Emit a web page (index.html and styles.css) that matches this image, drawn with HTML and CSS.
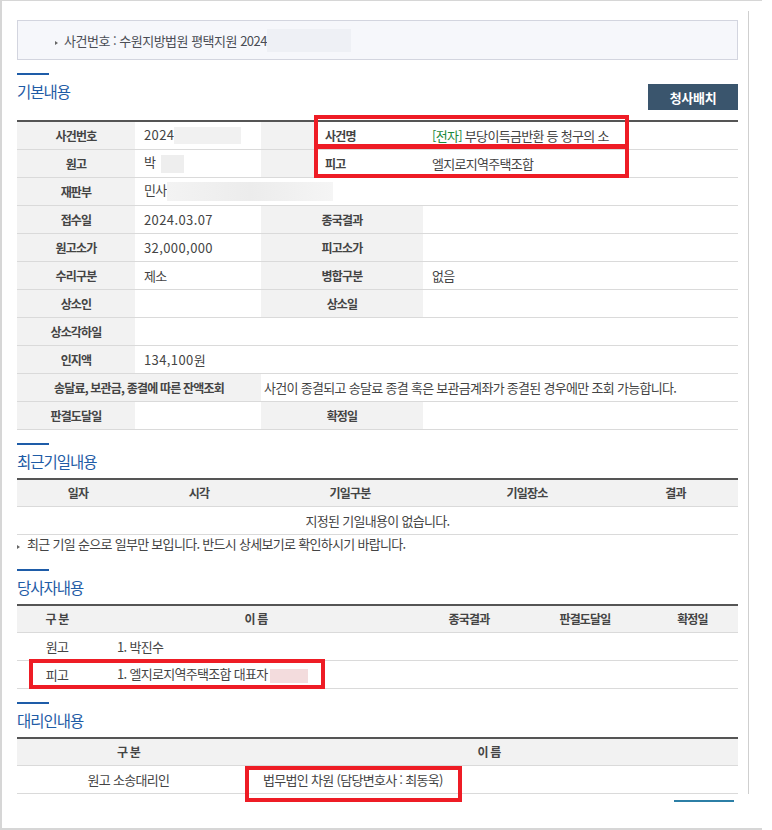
FILE: index.html
```html
<!DOCTYPE html>
<html lang="ko">
<head>
    <meta charset="UTF-8">
    <meta name="viewport" content="width=device-width, initial-scale=1.0">
    <title>사건일반내용</title>
    <link rel="stylesheet" href="styles.css">
</head>
<body>
<div class="frame">
    <div class="page">
        <div class="case-box">
            <span class="bullet"></span>사건번호 : 수원지방법원 평택지원 2024<span class="mask mask-case"></span>
        </div>

        <!-- 기본내용 -->
        <div class="sec-head">
            <h2 class="sec-title">기본내용</h2>
            <button class="btn-map">청사배치</button>
        </div>
        <table class="grid info">
            <colgroup>
                <col class="w118"><col class="w126"><col class="w162"><col>
            </colgroup>
            <tr>
                <th>사건번호</th>
                <td class="num">2024<span class="mask mask-no"></span></td>
                <th class="plain">사건명</th>
                <td><span class="tag">[전자]</span> 부당이득금반환 등 청구의 소</td>
            </tr>
            <tr>
                <th>원고</th>
                <td>박<span class="mask mask-name"></span></td>
                <th class="plain">피고</th>
                <td>엘지로지역주택조합</td>
            </tr>
            <tr>
                <th>재판부</th>
                <td colspan="3">민사<span class="mask mask-court"></span></td>
            </tr>
            <tr>
                <th>접수일</th>
                <td class="num">2024.03.07</td>
                <th>종국결과</th>
                <td></td>
            </tr>
            <tr>
                <th>원고소가</th>
                <td class="num">32,000,000</td>
                <th>피고소가</th>
                <td></td>
            </tr>
            <tr>
                <th>수리구분</th>
                <td>제소</td>
                <th>병합구분</th>
                <td>없음</td>
            </tr>
            <tr>
                <th>상소인</th>
                <td></td>
                <th>상소일</th>
                <td></td>
            </tr>
            <tr>
                <th>상소각하일</th>
                <td colspan="3"></td>
            </tr>
            <tr>
                <th>인지액</th>
                <td colspan="3" class="num">134,100원</td>
            </tr>
            <tr>
                <th colspan="2">송달료, 보관금, 종결에 따른 잔액조회</th>
                <td colspan="2" class="tight">사건이 종결되고 송달료 종결 혹은 보관금계좌가 종결된 경우에만 조회 가능합니다.</td>
            </tr>
            <tr>
                <th>판결도달일</th>
                <td></td>
                <th>확정일</th>
                <td></td>
            </tr>
        </table>

        <!-- 최근기일내용 -->
        <div class="sec-head">
            <h2 class="sec-title">최근기일내용</h2>
        </div>
        <table class="grid list">
            <colgroup>
                <col class="w122"><col class="w120"><col class="w182"><col class="w172"><col>
            </colgroup>
            <tr>
                <th>일자</th><th>시각</th><th>기일구분</th><th>기일장소</th><th>결과</th>
            </tr>
            <tr>
                <td colspan="5" class="center">지정된 기일내용이 없습니다.</td>
            </tr>
        </table>
        <p class="note"><span class="bullet"></span>최근 기일 순으로 일부만 보입니다. 반드시 상세보기로 확인하시기 바랍니다.</p>

        <!-- 당사자내용 -->
        <div class="sec-head">
            <h2 class="sec-title">당사자내용</h2>
        </div>
        <table class="grid list">
            <colgroup>
                <col class="w80"><col class="w318"><col class="w108"><col class="w124"><col>
            </colgroup>
            <tr>
                <th>구 분</th><th>이 름</th><th>종국결과</th><th>판결도달일</th><th>확정일</th>
            </tr>
            <tr>
                <td class="center">원고</td>
                <td class="name">1. 박진수</td>
                <td></td><td></td><td></td>
            </tr>
            <tr>
                <td class="center">피고</td>
                <td class="name">1. 엘지로지역주택조합 대표자<span class="mask mask-rep"></span></td>
                <td></td><td></td><td></td>
            </tr>
        </table>

        <!-- 대리인내용 -->
        <div class="sec-head">
            <h2 class="sec-title">대리인내용</h2>
        </div>
        <table class="grid list">
            <colgroup>
                <col class="w223"><col>
            </colgroup>
            <tr>
                <th>구 분</th><th>이 름</th>
            </tr>
            <tr>
                <td class="center">원고 소송대리인</td>
                <td class="agent">법무법인 차원 (담당변호사 : 최동욱)</td>
            </tr>
        </table>
        <div class="next-bar"></div>
    </div>

    <!-- highlight marks -->
    <div class="mark mark-title"></div>
    <div class="mark mark-defendant"></div>
    <div class="mark mark-party"></div>
    <div class="mark mark-agent"></div>
</div>
</body>
</html>
```

FILE: styles.css
```css
body {
    margin: 0;
    font-family: "Noto Sans CJK KR", sans-serif;
    font-size: 13px;
    color: #444;
    background: #fff;
}

.frame {
    position: relative;
    width: 760px;
    height: 827px;
    border-top: 1px solid #d6d6d6;
    border-left: 2px solid #d6d6d6;
    border-bottom: 2px solid #d6d6d6;
}

.page {
    margin-top: 10px;
    padding: 9px 0 0 15px;
    height: 783px;
    box-sizing: border-box;
    width: 747px;
    border-right: 1px solid #cfcfcf;
}

.case-box {
    width: 721px;
    height: 40px;
    box-sizing: border-box;
    border: 1px solid #d3d5df;
    background: #f6f7fb;
    padding-left: 37px;
    display: flex;
    align-items: center;
    font-size: 13px;
    letter-spacing: -0.5px;
    color: #4a4d55;
}

.bullet {
    display: inline-block;
    width: 0;
    height: 0;
    border-left: 3px solid #666;
    border-top: 2.5px solid transparent;
    border-bottom: 2.5px solid transparent;
    margin-right: 6px;
    margin-top: 5px;
}

.mask {
    display: inline-block;
    vertical-align: middle;
}

.mask-case {
    width: 84px;
    height: 23px;
    background: #eef0f5;
}

.mask-no {
    width: 67px;
    height: 17px;
    background: #f1f1f1;
}

.mask-name {
    width: 23px;
    height: 18px;
    background: #eeeeee;
    margin-left: 6px;
}

.mask-court {
    width: 166px;
    height: 19px;
    background: linear-gradient(90deg, #f3f3f3, #ececec 50%, #f5f5f5);
}

.mask-rep {
    width: 38px;
    height: 14px;
    background: #f3dcdd;
    margin-left: 3px;
}

.sec-head {
    display: flex;
    justify-content: space-between;
    align-items: flex-start;
    width: 721px;
    margin-top: 13px;
}

.sec-title {
    margin: 0 0 7px;
    font-size: 15.5px;
    font-weight: normal;
    line-height: 20px;
    letter-spacing: -1px;
    color: #1f5ca6;
}

.sec-title::before {
    content: '';
    display: block;
    width: 32px;
    height: 2px;
    background: #1e5ca8;
    margin-bottom: 6px;
}

.btn-map {
    margin: 11px 0 10px;
    width: 90px;
    height: 26px;
    padding: 0;
    border: none;
    background: #3a556d;
    color: #fff;
    font-family: inherit;
    font-size: 13px;
    font-weight: bold;
    letter-spacing: -0.3px;
}

.grid {
    width: 721px;
    border-collapse: collapse;
    table-layout: fixed;
    border-top: 2px solid #555;
}

.grid th,
.grid td {
    height: 27px;
    padding: 0 9px;
    border-bottom: 1px solid #dadada;
    line-height: 16px;
    letter-spacing: -0.7px;
    white-space: nowrap;
}

.grid th {
    background: #f2f2f2;
    font-size: 12px;
    font-weight: bold;
    letter-spacing: -0.8px;
    color: #444;
    text-align: center;
}

.grid td {
    background: #fff;
}

.info th.plain {
    background: linear-gradient(90deg, #f2f2f2 53px, #fff 53px);
    text-align: left;
    padding-left: 64px;
}

.info td.tight {
    padding-left: 3px;
}

.grid td.num {
    letter-spacing: 0.4px;
}

.tag {
    color: #1d8a3c;
}

.list th {
    height: 26px;
}

.list td {
    height: 27px;
}

.center {
    text-align: center;
}

.list td.name {
    padding-left: 20px;
}

.list td.agent {
    padding-left: 23px;
}

.note {
    margin: 0;
    height: 21px;
    line-height: 18px;
    letter-spacing: -0.7px;
}

.note .bullet {
    margin-right: 7px;
    margin-top: 0;
}

.next-bar {
    width: 60px;
    height: 2px;
    background: #2c7fa6;
    margin: 6px 0 0 657px;
}

.w80 { width: 80px; }
.w118 { width: 118px; }
.w120 { width: 120px; }
.w122 { width: 122px; }
.w108 { width: 108px; }
.w124 { width: 124px; }
.w126 { width: 126px; }
.w162 { width: 162px; }
.w172 { width: 172px; }
.w182 { width: 182px; }
.w223 { width: 223px; }
.w318 { width: 318px; }

.mark {
    position: absolute;
    border: 4px solid #ee1c25;
    box-sizing: border-box;
}

.mark-title {
    left: 312px;
    top: 114px;
    width: 315px;
    height: 34px;
}

.mark-defendant {
    left: 312px;
    top: 143px;
    width: 315px;
    height: 34px;
}

.mark-party {
    left: 27px;
    top: 658px;
    width: 296px;
    height: 30px;
}

.mark-agent {
    left: 243px;
    top: 765px;
    width: 217px;
    height: 36px;
}
```
